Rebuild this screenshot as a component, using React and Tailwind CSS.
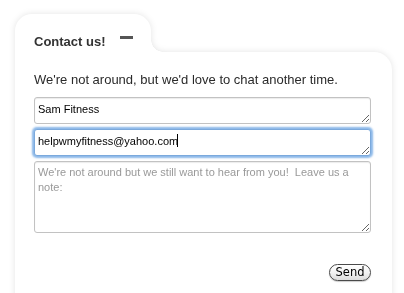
export default function App() {
  const sans = { fontFamily: '"Liberation Sans", Arial, sans-serif' };
  return (
    <div className="h-[293px] w-[404px] overflow-hidden bg-white" style={sans}>
      <div className="flex h-[400px] flex-col pl-[15px] pr-[12px] pt-[14px] drop-shadow-[0_0_3px_rgba(0,0,0,0.11)]">
        <div className="flex items-end">
          <div className="flex h-[38px] w-[136px] items-start rounded-t-[17px] bg-white pl-[19px] pt-[20px]">
            <span className="text-[13px] font-bold leading-[16px] text-[#333]">Contact us!</span>
            <span className="ml-[14px] mt-[2px] h-[3px] w-[13px] bg-[#555]" />
          </div>
          <div className="h-[12px] w-[12px] bg-[radial-gradient(circle_at_100%_0,transparent_11.5px,white_12px)]" />
        </div>
        <div className="flex flex-1 flex-col rounded-tr-[18px] bg-white pl-[19px] pr-[21px] pt-[20px]">
          <p className="text-[13px] leading-[16px] text-[#2a2a2a]">We're not around, but we'd love to chat another time.</p>
          <div className="mt-[9px] flex flex-col gap-[5px]">
            <textarea
              readOnly
              defaultValue="Sam Fitness"
              className="block h-[27px] w-full resize-y overflow-hidden rounded-[3px] border border-[#c2c2c2] bg-white px-[3px] pt-[4px] text-[11px] leading-[15px] text-black shadow-[inset_0_1px_1px_rgba(0,0,0,0.08)] outline-none"
              style={sans}
            />
            <div className="relative">
              <textarea
                readOnly
                defaultValue="helpwmyfitness@yahoo.com"
                className="block h-[27px] w-full resize-y overflow-hidden rounded-[3px] border border-[#7ba9dc] bg-white px-[3px] pt-[4px] text-[11px] leading-[15px] text-black shadow-[0_0_2px_2px_rgba(100,160,225,0.75)] outline-none"
                style={sans}
              />
              <span className="absolute left-[143px] top-[5px] h-[13px] w-px bg-black" />
            </div>
            <textarea
              readOnly
              placeholder="We're not around but we still want to hear from you!  Leave us a note:"
              className="block h-[72px] w-full resize-y rounded-[3px] border border-[#c2c2c2] bg-white px-[3px] pt-[3px] text-[11px] leading-[15px] text-black shadow-[inset_0_1px_1px_rgba(0,0,0,0.08)] outline-none placeholder:text-[#999]"
              style={sans}
            />
          </div>
          <div className="mt-[31px] flex justify-end">
            <button
              className="flex h-[17px] w-[42px] items-center justify-center rounded-full border border-[#4a4a4a] bg-[linear-gradient(#ffffff,#f2f2f2_50%,#dcdcdc)] text-[11.5px] leading-none text-black shadow-[0_1px_1px_rgba(0,0,0,0.2)]"
              style={{ fontFamily: '"DejaVu Sans", sans-serif' }}
            >
              Send
            </button>
          </div>
        </div>
      </div>
    </div>
  );
}
